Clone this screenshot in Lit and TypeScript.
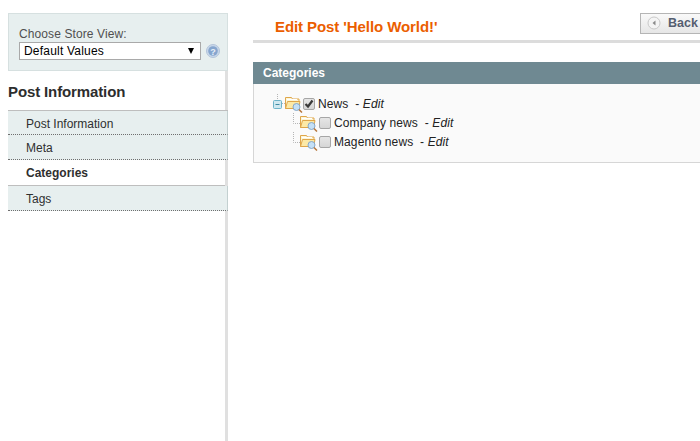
import { LitElement, html, css, svg } from 'lit';
import { customElement } from 'lit/decorators.js';

const tabs = [
  { label: 'Post Information', active: false },
  { label: 'Meta', active: false },
  { label: 'Categories', active: true },
  { label: 'Tags', active: false },
];

const children = ['Company news', 'Magento news'];

// folder with the little magnifier, same icon on each tree row
const folderIcon = svg`
  <svg class="folder" width="18" height="17" viewBox="0 0 18 17">
    <path d="M0.500 1.500h6l1 1.500h6.500v9.500h-13.500z" fill="#fdf6d6" stroke="#dfa64a"/>
    <path d="M2.500 5.500h12.500l-1.500 7h-13z" fill="#fce9a6" stroke="#dfa64a"/>
    <path d="M2 3.500h10" stroke="#fff" fill="none"/>
    <circle cx="11.500" cy="11" r="3.500" fill="#c4e0f6" stroke="#86a8c8"/>
    <path d="M14 13.500l3 3" stroke="#b5763a" stroke-width="1.500" fill="none"/>
  </svg>
`;

@customElement('app-root')
export class AppRoot extends LitElement {
  static styles = css`
    :host {
      display: block;
      height: 441px;
      overflow: hidden;
      background: #fff;
      font-family: 'Liberation Sans', Arial, sans-serif;
      font-size: 12px;
      color: #2f2f2f;
    }
    .page {
      display: flex;
      height: 441px;
      padding-left: 8px;
      gap: 25px;
      box-sizing: border-box;
    }
    .side {
      width: 220px;
      flex: none;
      padding-top: 13px;
      box-sizing: border-box;
    }
    .switcher {
      height: 58px;
      box-sizing: border-box;
      padding: 13px 0 0 10px;
      background: #e7efef;
      border: 1px solid #d6e0e0;
      color: #505050;
    }
    .switcher label {
      display: block;
      line-height: 14px;
      height: 15px;
      letter-spacing: 0.1px;
    }
    .picker {
      display: flex;
      align-items: center;
      gap: 5px;
    }
    .select {
      width: 182px;
      height: 18px;
      box-sizing: border-box;
      border: 1px solid #a9a9a9;
      background: #fff;
      color: #000;
      padding: 0 4px;
      display: flex;
      align-items: center;
      justify-content: space-between;
      line-height: 15px;
      letter-spacing: 0.2px;
    }
    .arrow {
      width: 0;
      height: 0;
      border-left: 3.5px solid transparent;
      border-right: 3.5px solid transparent;
      border-top: 6px solid #000;
      margin-right: 2px;
    }
    .help {
      display: block;
      flex: none;
    }
    .rail {
      height: 370px;
      border-right: 3px solid #e0e0e0;
      box-sizing: border-box;
    }
    h3 {
      margin: 0;
      height: 39px;
      box-sizing: border-box;
      padding-top: 12px;
      font-size: 15px;
      line-height: 17px;
      letter-spacing: -0.12px;
      font-weight: bold;
      color: #2d2d2d;
    }
    ul {
      list-style: none;
      margin: 0 -3px 0 0;
      padding: 0;
      border-top: 1px solid #bebebe;
    }
    li {
      height: 23px;
      box-sizing: content-box;
      padding: 1px 0 0 18px;
      line-height: 25px;
      background: #e7efef;
      border-bottom: 1px dotted #6f6f6f;
      border-right: 1px solid #c3d0d0;
      color: #2f2f2f;
    }
    li:first-child {
      height: 22px;
    }
    li.active {
      height: 24px;
      background: #fff;
      font-weight: bold;
      border-bottom: 1px solid #bebebe;
      border-right: 0;
      margin-right: 3px;
    }
    .main {
      flex: 1;
      min-width: 0;
      padding-top: 13px;
    }
    .head {
      height: 27px;
      border-bottom: 3px solid #dcdcdc;
      display: flex;
      justify-content: space-between;
      align-items: flex-start;
      padding-left: 22px;
    }
    h2 {
      margin: 0;
      padding-top: 6px;
      font-size: 15px;
      line-height: 16px;
      letter-spacing: -0.08px;
      font-weight: bold;
      color: #eb5e00;
    }
    .back {
      width: 60px;
      height: 21px;
      flex: none;
      box-sizing: border-box;
      display: flex;
      align-items: center;
      gap: 7px;
      padding: 0 0 2px 6px;
      background: linear-gradient(#f9f9f9, #e6e6e6);
      border: 1px solid #b5b5b5;
      border-right: 0;
      font-weight: bold;
      font-size: 12.500px;
      color: #555e70;
    }
    .fieldset {
      margin-top: 19px;
    }
    .bar {
      height: 22px;
      line-height: 22px;
      padding-left: 10px;
      background: #6f8992;
      color: #fff;
      font-weight: bold;
    }
    .tree {
      height: 79px;
      box-sizing: border-box;
      padding: 10px 0 0 18px;
      background: #fafafa;
      border: 1px solid #d6d6d6;
      border-top: 0;
      border-right: 0;
      color: #222;
      letter-spacing: 0.1px;
    }
    .node {
      display: flex;
      align-items: center;
      height: 19px;
      white-space: pre;
    }
    .node.child {
      margin-left: 21px;
    }
    .expander {
      display: block;
      flex: none;
    }
    .folder {
      display: block;
      flex: none;
      margin-top: 2px;
    }
    .lines {
      display: block;
      flex: none;
      width: 7px;
      height: 19px;
    }
    .box {
      width: 12px;
      height: 12px;
      margin: 0 3px 0 0;
      flex: none;
      box-sizing: border-box;
      background: linear-gradient(#e6e6e6, #d6d6d6);
      border: 1px solid #a6a6a6;
      border-radius: 2px;
      display: flex;
      align-items: center;
      justify-content: center;
    }
    .child .box {
      margin-left: 1px;
    }
    em {
      font-style: italic;
    }
  `;

  render() {
    return html`
      <div class="page">
        <aside class="side">
          <div class="switcher">
            <label>Choose Store View:</label>
            <div class="picker">
              <div class="select"><span>Default Values</span><i class="arrow"></i></div>
              <svg class="help" width="14" height="14" viewBox="0 0 14 14">
                <circle cx="7" cy="7" r="6.500" fill="#c9d8ea" stroke="#b3c4da"/>
                <circle cx="7" cy="7" r="4.800" fill="#86a6cf"/>
                <text x="7" y="10.500" text-anchor="middle" font-size="9" font-weight="bold" fill="#e8f0f8" font-family="Liberation Sans">?</text>
              </svg>
            </div>
          </div>
          <div class="rail">
            <h3>Post Information</h3>
            <ul>
              ${tabs.map((t) => html`<li class=${t.active ? 'active' : ''}>${t.label}</li>`)}
            </ul>
          </div>
        </aside>
        <main class="main">
          <div class="head">
            <h2>Edit Post 'Hello World!'</h2>
            <div class="back">
              <svg width="14" height="14" viewBox="0 0 14 14">
                <circle cx="7" cy="7" r="6" fill="#f4f4f4" stroke="#c9c9c9"/>
                <path d="M8.500 4.500v5l-3-2.500z" fill="#8a8a8a"/>
              </svg>
              <span>Back</span>
            </div>
          </div>
          <section class="fieldset">
            <div class="bar">Categories</div>
            <div class="tree">
              <div class="node">
                <svg class="expander" width="13" height="19" viewBox="0 0 13 19">
                  <path d="M5.500 0v5M10 9.500h3" stroke="#b5b5b5" stroke-dasharray="1 1" fill="none"/>
                  <rect x="1.500" y="6.500" width="8" height="8" rx="1" fill="#cfe8f0" stroke="#6db3c9"/>
                  <path d="M3.500 10.500h4" stroke="#3d8aa3" fill="none"/>
                </svg>
                ${folderIcon}
                <span class="box">
                  <svg width="10" height="10" viewBox="0 0 10 10">
                    <path d="M1.500 5l2.500 2.500 4.500-6" stroke="#3a3a3a" stroke-width="2.200" fill="none"/>
                  </svg>
                </span>
                <span>News  - <em>Edit</em></span>
              </div>
              ${children.map(
                (name) => html`
                  <div class="node child">
                    <svg class="lines" viewBox="0 0 7 19">
                      <path d="M0.500 0v10.500h7" stroke="#b5b5b5" stroke-dasharray="1 1" fill="none"/>
                    </svg>
                    ${folderIcon}
                    <span class="box"></span>
                    <span>${name}  - <em>Edit</em></span>
                  </div>
                `,
              )}
            </div>
          </section>
        </main>
      </div>
    `;
  }
}
